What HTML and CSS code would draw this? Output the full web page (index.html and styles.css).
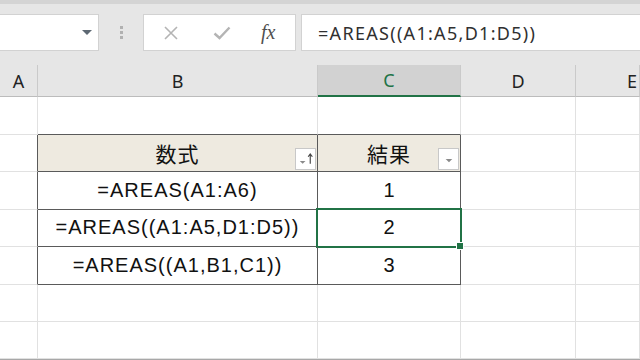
FILE: index.html
```html
<!DOCTYPE html>
<html lang="ja">
<head>
  <meta charset="UTF-8" />
  <meta name="viewport" content="width=device-width, initial-scale=1.0"/>
  <title>AREAS関数</title>
  <link rel="stylesheet" href="styles.css">
</head>
<body>

  <div class="ribbon-edge"></div>

  <div class="formula-bar">
    <div class="name-box">
      <svg class="name-drop" width="10" height="6" viewBox="0 0 10 6"><path d="M0 0h10L5 5z" fill="#5d6873"/></svg>
    </div>
    <div class="grip">
      <span></span><span></span><span></span>
    </div>
    <div class="fx-buttons">
      <svg class="fx-cancel" width="14" height="14" viewBox="0 0 14 14"><path d="M1 1l12 12M13 1L1 13" stroke="#b4b4b4" stroke-width="1.6" fill="none"/></svg>
      <svg class="fx-enter" width="18" height="14" viewBox="0 0 18 14"><path d="M1.5 7.5l5 4.5L16.5 1.5" stroke="#b4b4b4" stroke-width="2.4" fill="none"/></svg>
      <span class="fx-label">fx</span>
    </div>
    <div class="formula-input">=AREAS((A1:A5,D1:D5))</div>
  </div>

  <div class="sheet">
    <div class="row col-heads">
      <div class="ch">A</div>
      <div class="ch">B</div>
      <div class="ch ch-active">C</div>
      <div class="ch">D</div>
      <div class="ch ch-cut">E</div>
    </div>

    <div class="row">
      <div class="cell"></div>
      <div class="cell above-table"></div>
      <div class="cell above-table"></div>
      <div class="cell"></div>
      <div class="cell"></div>
    </div>

    <div class="row">
      <div class="cell left-of-table"></div>
      <div class="cell tbl tbl-head">数式
        <span class="filter-btn">
          <svg width="20" height="20" viewBox="0 0 20 20"><path d="M4 12h6l-3 3z" fill="#8a8a8a"/><path d="M15 5v10M12.8 7.6L15 4.6l2.2 3" stroke="#444" stroke-width="1.2" fill="none"/></svg>
        </span>
      </div>
      <div class="cell tbl tbl-head">結果
        <span class="filter-btn">
          <svg width="20" height="20" viewBox="0 0 20 20"><path d="M7 10h7l-3.5 3.5z" fill="#8a8a8a"/></svg>
        </span>
      </div>
      <div class="cell"></div>
      <div class="cell"></div>
    </div>

    <div class="row">
      <div class="cell left-of-table"></div>
      <div class="cell tbl">=AREAS(A1:A6)</div>
      <div class="cell tbl num">1</div>
      <div class="cell"></div>
      <div class="cell"></div>
    </div>

    <div class="row">
      <div class="cell left-of-table"></div>
      <div class="cell tbl">=AREAS((A1:A5,D1:D5))</div>
      <div class="cell tbl num selected">2</div>
      <div class="cell"></div>
      <div class="cell"></div>
    </div>

    <div class="row">
      <div class="cell left-of-table"></div>
      <div class="cell tbl">=AREAS((A1,B1,C1))</div>
      <div class="cell tbl num">3</div>
      <div class="cell"></div>
      <div class="cell"></div>
    </div>

    <div class="row">
      <div class="cell"></div>
      <div class="cell"></div>
      <div class="cell"></div>
      <div class="cell"></div>
      <div class="cell"></div>
    </div>

    <div class="row last">
      <div class="cell"></div>
      <div class="cell"></div>
      <div class="cell"></div>
      <div class="cell"></div>
      <div class="cell"></div>
    </div>
  </div>

  <div class="scroll-edge"></div>

</body>
</html>
```

FILE: styles.css
```css
body {
  margin: 0;
  width: 640px;
  height: 360px;
  overflow: hidden;
  background: #ffffff;
  font-family: 'Liberation Sans', Arial, sans-serif;
}

.ribbon-edge {
  height: 4px;
  background: #d4d4d4;
}

/* formula bar */
.formula-bar {
  height: 61px;
  box-sizing: border-box;
  padding-top: 10px;
  background: #e6e6e6;
  display: flex;
  align-items: flex-start;
}

.name-box {
  width: 99px;
  height: 37px;
  box-sizing: border-box;
  background: white;
  border: 1px solid #d2d2d2;
  border-left: none;
  display: flex;
  align-items: center;
  justify-content: flex-end;
  padding-right: 6px;
}

.grip {
  width: 44px;
  height: 37px;
  display: flex;
  flex-direction: column;
  align-items: center;
  justify-content: center;
  gap: 2px;
}

.grip span {
  width: 3px;
  height: 3px;
  background: #b1b1b1;
}

.fx-buttons {
  width: 153px;
  height: 37px;
  box-sizing: border-box;
  background: white;
  border: 1px solid #d2d2d2;
  display: flex;
  align-items: center;
  padding-left: 20px;
}

.fx-enter {
  margin-left: 35px;
}

.fx-label {
  margin-left: 30px;
  font-family: 'Liberation Serif', 'Times New Roman', serif;
  font-style: italic;
  font-size: 20px;
  color: #505050;
}

.formula-input {
  flex: 1;
  height: 37px;
  margin-left: 5px;
  box-sizing: border-box;
  background: white;
  border: 1px solid #d2d2d2;
  border-right: none;
  padding-left: 16px;
  font-family: 'Noto Sans', sans-serif;
  font-size: 18px;
  letter-spacing: 1.3px;
  line-height: 36px;
  color: #303030;
  white-space: nowrap;
}

/* sheet grid */
.row {
  display: grid;
  grid-template-columns: 38px 280px 143px 115px 1fr;
  height: 37.5px;
}

.row.last {
  height: 37px;
}

.cell {
  position: relative;
  box-sizing: border-box;
  border-right: 1px solid #e1e1e1;
  border-bottom: 1px solid #e1e1e1;
  display: flex;
  align-items: center;
  justify-content: center;
  font-size: 20px;
  letter-spacing: 1px;
  color: #111;
}

.col-heads {
  height: 32px;
  background: #e6e6e6;
}

.ch {
  box-sizing: border-box;
  border-right: 1px solid #cacaca;
  border-bottom: 1px solid #bcbcbc;
  display: flex;
  align-items: center;
  justify-content: center;
  font-family: 'Noto Sans', sans-serif;
  font-size: 18px;
  color: #222;
}

/* E column is cut by the window edge, its label sits off-centre */
.ch-cut {
  justify-content: flex-start;
  padding-left: 51px;
}

.ch-active {
  background: #d2d2d2;
  color: #217346;
  border-bottom: 2px solid #217346;
}

.above-table {
  border-bottom-color: #5a5a5a;
}

.left-of-table {
  border-right-color: #5a5a5a;
}

.tbl {
  border-right-color: #5a5a5a;
  border-bottom-color: #5a5a5a;
}

.tbl-head {
  background: #eeeae0;
  font-family: 'Noto Sans CJK JP', sans-serif;
  font-size: 21px;
  letter-spacing: 1px;
}

.num {
  letter-spacing: 0;
}

.filter-btn {
  position: absolute;
  right: 1px;
  top: 13px;
  width: 21px;
  height: 22px;
  box-sizing: border-box;
  background: white;
  border: 1px solid #c8c8c8;
  display: flex;
  align-items: center;
  justify-content: center;
}

.selected::after {
  content: "";
  position: absolute;
  left: -2px;
  top: -2px;
  right: -2px;
  bottom: -2px;
  border: 2px solid #217346;
}

.selected::before {
  content: "";
  position: absolute;
  right: -4px;
  bottom: -4px;
  width: 6px;
  height: 6px;
  background: #217346;
  border: 1px solid white;
  z-index: 1;
}

.scroll-edge {
  height: 1px;
  background: #a8a8a8;
}
```
